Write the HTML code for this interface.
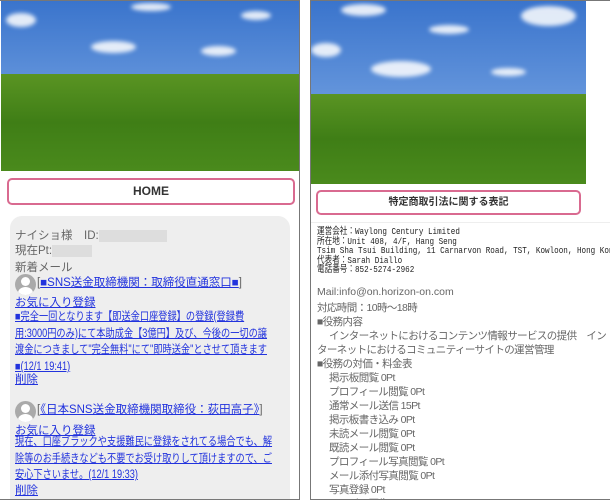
<!DOCTYPE html>
<html><head><meta charset="utf-8"><style>
*{margin:0;padding:0;box-sizing:border-box}
body{width:610px;height:500px;overflow:hidden;background:#fff;font-family:"Liberation Sans","Noto Sans CJK JP",sans-serif;position:relative}
.p{position:absolute;top:0;height:500px;border:1px solid #777;background:#fff;overflow:hidden}
.img{position:absolute;background:linear-gradient(#3a74cc 0%,#6a9ade 60%,#a9c7ea 100%);overflow:hidden}
.grass{position:absolute;left:0;right:0;bottom:0;background:linear-gradient(#5a9423,#3f7e16 50%,#4a8a1c)}
.cl{position:absolute;background:#fff;border-radius:50%;opacity:.85;filter:blur(2px)}
.btn{position:absolute;border:2px solid #d96a90;border-radius:5px;background:#fff;text-align:center;font-weight:bold;color:#333}
.box{position:absolute;left:10px;top:215px;width:280px;height:300px;background:#eee;border-radius:12px;font-size:11.5px;color:#666}
.box div{position:absolute;left:5px;white-space:nowrap}
a,.a{color:#2233dd;text-decoration:underline}
.av{position:absolute;width:21px;height:21px;border-radius:50%;background:#aaa;overflow:hidden}
.av:before{content:"";position:absolute;left:6px;top:3px;width:9px;height:9px;border-radius:50%;background:#fff}
.av:after{content:"";position:absolute;left:3px;top:13px;width:15px;height:12px;border-radius:50%;background:#fff}
.r{position:absolute;left:6px;white-space:nowrap;color:#666;font-size:10.5px;letter-spacing:-0.6px}
.m{position:absolute;left:6px;white-space:nowrap;font-family:"Liberation Sans Narrow","Liberation Mono","Noto Sans CJK JP",monospace;font-size:9.5px;line-height:9.5px;color:#222;transform:scaleX(.8);transform-origin:left}
.box div.ln{line-height:16.7px;transform:scaleX(.8);transform-origin:0 0}
</style></head><body>
<div class="p" style="left:-1px;width:301px;">
 <div class="img" style="left:1px;top:0;width:298px;height:170px">
  <div class="grass" style="top:73px"></div>
  <div class="cl" style="left:5px;top:12px;width:30px;height:14px"></div>
  <div class="cl" style="left:90px;top:40px;width:45px;height:12px"></div>
  <div class="cl" style="left:200px;top:45px;width:35px;height:10px"></div>
  <div class="cl" style="left:130px;top:2px;width:40px;height:8px"></div>
  <div class="cl" style="left:240px;top:10px;width:30px;height:9px"></div>
 </div>
 <div class="btn" style="left:7px;top:177px;width:288px;height:27px;font-size:12px;line-height:23px">HOME</div>
 <div class="box">
  <div style="top:11px">ナイショ様　ID:<span style="display:inline-block;width:68px;height:12px;background:#ddd;vertical-align:middle"></span></div>
  <div style="top:26px">現在Pt:<span style="display:inline-block;width:40px;height:12px;background:#ddd;vertical-align:middle"></span></div>
  <div style="top:43px">新着メール</div>
  <div class="av" style="top:58px;left:5px"></div>
  <div style="top:58px;left:27px">[<span class="a">■SNS送金取締機関：取締役直通窓口■</span>]</div>
  <div style="top:78px" class="a">お気に入り登録</div>
  <div style="top:93px" class="a ln">■完全一回となります【即送金口座登録】の登録(登録費<br>用:3000円のみ)にて本助成金【3億円】及び、今後の一切の譲<br>渡金につきまして"完全無料"にて"即時送金"とさせて頂きます<br>■(12/1 19:41)</div>
  <div style="top:155px" class="a">削除</div>
  <div class="av" style="top:185px;left:5px"></div>
  <div style="top:185px;left:27px">[<span class="a">《日本SNS送金取締機関取締役：荻田高子》</span>]</div>
  <div style="top:206px" class="a">お気に入り登録</div>
  <div style="top:218px" class="a ln">現在、口座ブラックや支援難民に登録をされてる場合でも、解<br>除等のお手続きなども不要でお受け取りして頂けますので、ご<br>安心下さいませ。(12/1 19:33)</div>
  <div style="top:266px" class="a">削除</div>
 </div>
</div>
<div class="p" style="left:310px;width:302px;">
 <div class="img" style="left:0;top:0;width:275px;height:183px">
  <div class="grass" style="top:93px"></div>
  <div class="cl" style="left:0;top:42px;width:30px;height:14px"></div>
  <div class="cl" style="left:60px;top:60px;width:60px;height:16px"></div>
  <div class="cl" style="left:30px;top:3px;width:45px;height:12px"></div>
  <div class="cl" style="left:118px;top:24px;width:40px;height:9px"></div>
  <div class="cl" style="left:210px;top:5px;width:55px;height:20px"></div>
  <div class="cl" style="left:180px;top:67px;width:35px;height:8px"></div>
 </div>
 <div class="btn" style="left:5px;top:189px;width:265px;height:25px;font-size:10px;line-height:21px">特定商取引法に関する表記</div>
 <div style="position:absolute;left:0;right:0;top:221px;border-top:1px solid #eee"></div>
 <div class="m" style="top:226px">運営会社：Waylong Century Limited<br>所在地：Unit 408, 4/F, Hang Seng<br>Tsim Sha Tsui Building, 11 Carnarvon Road, TST, Kowloon, Hong Kong<br>代表者：Sarah Diallo<br>電話番号：852-5274-2962</div>
 <div class="r" style="top:285px;letter-spacing:0">Mail:info@on.horizon-on.com</div>
 <div class="r" style="top:299px">対応時間：10時～18時</div>
 <div class="r" style="top:313px">■役務内容</div>
 <div class="r" style="top:327px;left:18px">インターネットにおけるコンテンツ情報サービスの提供　イン</div>
 <div class="r" style="top:341px">ターネットにおけるコミュニティーサイトの運営管理</div>
 <div class="r" style="top:355px">■役務の対価・料金表</div>
 <div class="r" style="top:369px;left:18px">掲示板閲覧 0Pt</div>
 <div class="r" style="top:383px;left:18px">プロフィール閲覧 0Pt</div>
 <div class="r" style="top:397px;left:18px">通常メール送信 15Pt</div>
 <div class="r" style="top:411px;left:18px">掲示板書き込み 0Pt</div>
 <div class="r" style="top:425px;left:18px">未読メール閲覧 0Pt</div>
 <div class="r" style="top:439px;left:18px">既読メール閲覧 0Pt</div>
 <div class="r" style="top:453px;left:18px">プロフィール写真閲覧 0Pt</div>
 <div class="r" style="top:467px;left:18px">メール添付写真閲覧 0Pt</div>
 <div class="r" style="top:481px;left:18px">写真登録 0Pt</div>
 <div class="r" style="top:495px;left:18px">ムービー再生 0Pt</div>
</div>
</body></html>
